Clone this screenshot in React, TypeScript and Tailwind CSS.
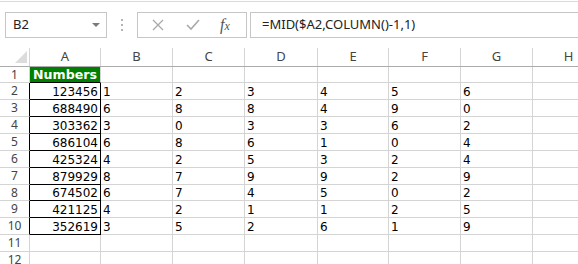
import React from "react"

const cols = [
  { name: "A", w: 71 },
  { name: "B", w: 72 },
  { name: "C", w: 72 },
  { name: "D", w: 73 },
  { name: "E", w: 71 },
  { name: "F", w: 72 },
  { name: "G", w: 72 },
  { name: "H", w: 72 },
]

const numbers = ["123456", "688490", "303362", "686104", "425324", "879929", "674502", "421125", "352619"]
const rowHeights = [16, 17, 17, 17, 17, 17, 17, 16, 17, 17, 17, 17]

const cellFont = { fontFamily: '"DejaVu Sans", Verdana, sans-serif' }

function Toolbar() {
  return (
    <div className="h-[47px] border-t border-[#dadada] mt-px" style={{ fontFamily: '"Noto Sans", "Open Sans", sans-serif' }}>
      <div className="flex items-start pt-[10px]">
        <div className="ml-[5px] w-[102px] h-[26px] border border-[#c6c6c6] flex items-center justify-between pl-[7px] pr-[6px]">
          <span className="text-[13px] text-[#222]">B2</span>
          <svg width="8" height="5" viewBox="0 0 8 5">
            <path d="M0 0 L8 0 L4 4 Z" fill="#7a7a7a" />
          </svg>
        </div>
        <div className="w-[30px] h-[26px] flex flex-col items-center justify-center gap-[3px]">
          <span className="w-[2px] h-[2px] bg-[#b4b4b4]" />
          <span className="w-[2px] h-[2px] bg-[#b4b4b4]" />
          <span className="w-[2px] h-[2px] bg-[#b4b4b4]" />
        </div>
        <div className="w-[110px] h-[26px] border border-[#c6c6c6] flex items-center">
          <svg width="12" height="12" viewBox="0 0 12 12" className="ml-[14px]">
            <path d="M1 1 L11 11 M11 1 L1 11" stroke="#a9a9a9" strokeWidth="1.3" />
          </svg>
          <svg width="14" height="12" viewBox="0 0 14 12" className="ml-[22px]">
            <path d="M1 6 L5 10 L13 1" stroke="#a9a9a9" strokeWidth="1.6" fill="none" />
          </svg>
          <span
            className="ml-[20px] text-[16px] italic text-[#555] leading-none"
            style={{ fontFamily: '"Liberation Serif", serif' }}
          >
            f<span className="text-[12px]">x</span>
          </span>
        </div>
        <div className="ml-[3px] flex-1 h-[26px] border border-r-0 border-[#c6c6c6] flex items-center pl-[11px]">
          <span className="text-[13px] text-[#222] whitespace-nowrap">=MID($A2,COLUMN()-1,1)</span>
        </div>
      </div>
    </div>
  )
}

function HeaderRow() {
  return (
    <div className="flex h-[19px] border-b border-[#ababab]" style={{ fontFamily: '"Noto Sans", "Open Sans", sans-serif' }}>
      <div className="w-[30px] shrink-0 border-r border-[#d5d5d5] relative">
        <svg width="12" height="12" viewBox="0 0 12 12" className="absolute left-[15px] top-[3px]">
          <path d="M12 0 L12 12 L0 12 Z" fill="#dcdcdc" />
        </svg>
      </div>
      {cols.map((c) => (
        <div
          key={c.name}
          style={{ width: c.w }}
          className="shrink-0 border-r border-[#d5d5d5] flex items-center justify-center text-[13px] text-[#444]"
        >
          {c.name}
        </div>
      ))}
    </div>
  )
}

export default function App() {
  return (
    <div className="w-[578px] h-[264px] overflow-hidden bg-white">
      <Toolbar />
      <HeaderRow />
      {rowHeights.map((h, i) => {
        const r = i + 1
        const isData = r >= 2 && r <= 10
        const digits = isData ? numbers[r - 2].split("") : []
        return (
          <div key={r} className="flex" style={{ height: h }}>
            <div
              className={`w-[30px] shrink-0 border-b border-r border-[#d4d4d4] flex items-center justify-center text-[12px] text-[#444] ${
                isData ? "border-r-black" : ""
              }`}
              style={{ fontFamily: '"Noto Sans", "Open Sans", sans-serif' }}
            >
              {r}
            </div>
            {cols.map((c, ci) => {
              let content: React.ReactNode = null
              let cls = "border-b border-r border-[#d4d4d4] text-[12px]"
              if (ci === 0) {
                if (r === 1) {
                  cls = "border-b border-b-black border-r border-r-[#d4d4d4] bg-[#008000] pl-[3px] font-bold text-white text-[12.6px] justify-start"
                  content = "Numbers"
                } else if (isData) {
                  cls = "border-b border-r border-black justify-end pr-[2px] text-black text-[12px]"
                  content = numbers[r - 2]
                }
              } else if (isData && ci <= 6) {
                cls += " pl-[2px] text-black"
                content = digits[ci - 1]
              }
              return (
                <div
                  key={c.name}
                  style={{ width: c.w, ...cellFont }}
                  className={`shrink-0 flex items-end leading-[14px] ${cls}`}
                >
                  {content}
                </div>
              )
            })}
          </div>
        )
      })}
    </div>
  )
}
